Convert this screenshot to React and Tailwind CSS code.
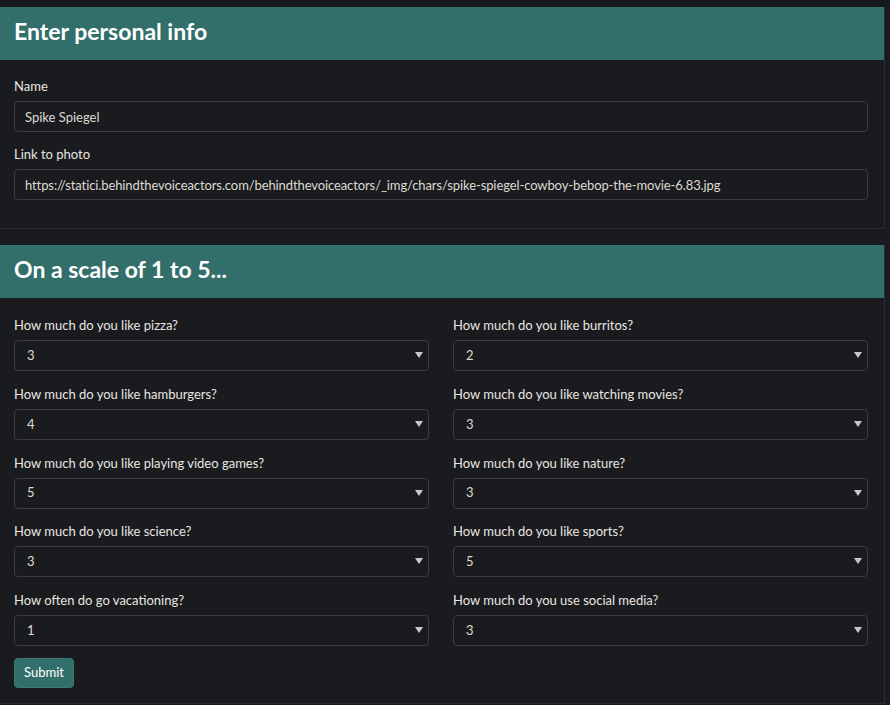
import React from "react";

const questions = [
  { label: "How much do you like pizza?", value: "3" },
  { label: "How much do you like burritos?", value: "2" },
  { label: "How much do you like hamburgers?", value: "4" },
  { label: "How much do you like watching movies?", value: "3" },
  { label: "How much do you like playing video games?", value: "5" },
  { label: "How much do you like nature?", value: "3" },
  { label: "How much do you like science?", value: "3" },
  { label: "How much do you like sports?", value: "5" },
  { label: "How often do go vacationing?", value: "1" },
  { label: "How much do you use social media?", value: "3" },
];

function CardHeader({ children }) {
  return (
    <div className="flex h-[53px] items-center bg-[#326f6b] pb-[4px] pl-[14px] text-[23px] font-bold text-white">
      {children}
    </div>
  );
}

function Field({ label, children }) {
  return (
    <div>
      <label className="mb-[5px] block h-5 text-[13px] leading-5 text-[#e9e6e0]">{label}</label>
      {children}
    </div>
  );
}

function ScaleSelect({ value }) {
  return (
    <div className="relative">
      <select
        defaultValue={value}
        className="h-[31px] w-full appearance-none rounded-[4px] border border-[#3a3d43] bg-[#1a1b1f] px-[12px] text-[13px] text-[#dedad2] outline-none"
      >
        {["1", "2", "3", "4", "5"].map((n) => (
          <option key={n} value={n}>
            {n}
          </option>
        ))}
      </select>
      <svg
        className="pointer-events-none absolute right-[6px] top-[12px]"
        width="8"
        height="7"
        viewBox="0 0 8 7"
      >
        <path d="M0 0 H8 L4 6 Z" fill="#c8c8c8" />
      </svg>
    </div>
  );
}

export default function App() {
  return (
    <div
      className="min-h-screen bg-[#1a1b1f]"
      style={{ fontFamily: 'Lato, "Noto Sans", sans-serif' }}
    >
      <div className="h-[7px] bg-[#17181b]" />

      <section className="w-[885px] border-r border-b border-[#2a2c30]">
        <CardHeader>Enter personal info</CardHeader>
        <div className="space-y-[12px] pl-[14px] pr-[16px] pt-[16px] pb-[28px]">
          <Field label="Name">
            <input
              defaultValue="Spike Spiegel"
              className="h-[31px] w-full rounded-[4px] border border-[#3a3d43] bg-[#1a1b1f] px-[10px] text-[13px] text-[#dedad2] outline-none"
            />
          </Field>
          <Field label="Link to photo">
            <input
              defaultValue="https://statici.behindthevoiceactors.com/behindthevoiceactors/_img/chars/spike-spiegel-cowboy-bebop-the-movie-6.83.jpg"
              className="h-[31px] w-full rounded-[4px] border border-[#3a3d43] bg-[#1a1b1f] px-[10px] text-[13px] tracking-[-0.1px] text-[#dedad2] outline-none"
            />
          </Field>
        </div>
      </section>

      <section className="mt-[16px] w-[885px] border-r border-b border-[#2a2c30]">
        <CardHeader>On a scale of 1 to 5...</CardHeader>
        <div className="pl-[14px] pr-[16px] pt-[17px] pb-[15px]">
          <div className="grid grid-cols-2 gap-x-[24px] gap-y-[12.75px]">
            {questions.map((q) => (
              <Field key={q.label} label={q.label}>
                <ScaleSelect value={q.value} />
              </Field>
            ))}
          </div>
          <button
            type="button"
            className="mt-[12px] h-[30px] rounded-[4px] border border-[#3b7a75] bg-[#326f6b] px-[9px] text-[13px] text-white"
          >
            Submit
          </button>
        </div>
      </section>
    </div>
  );
}
